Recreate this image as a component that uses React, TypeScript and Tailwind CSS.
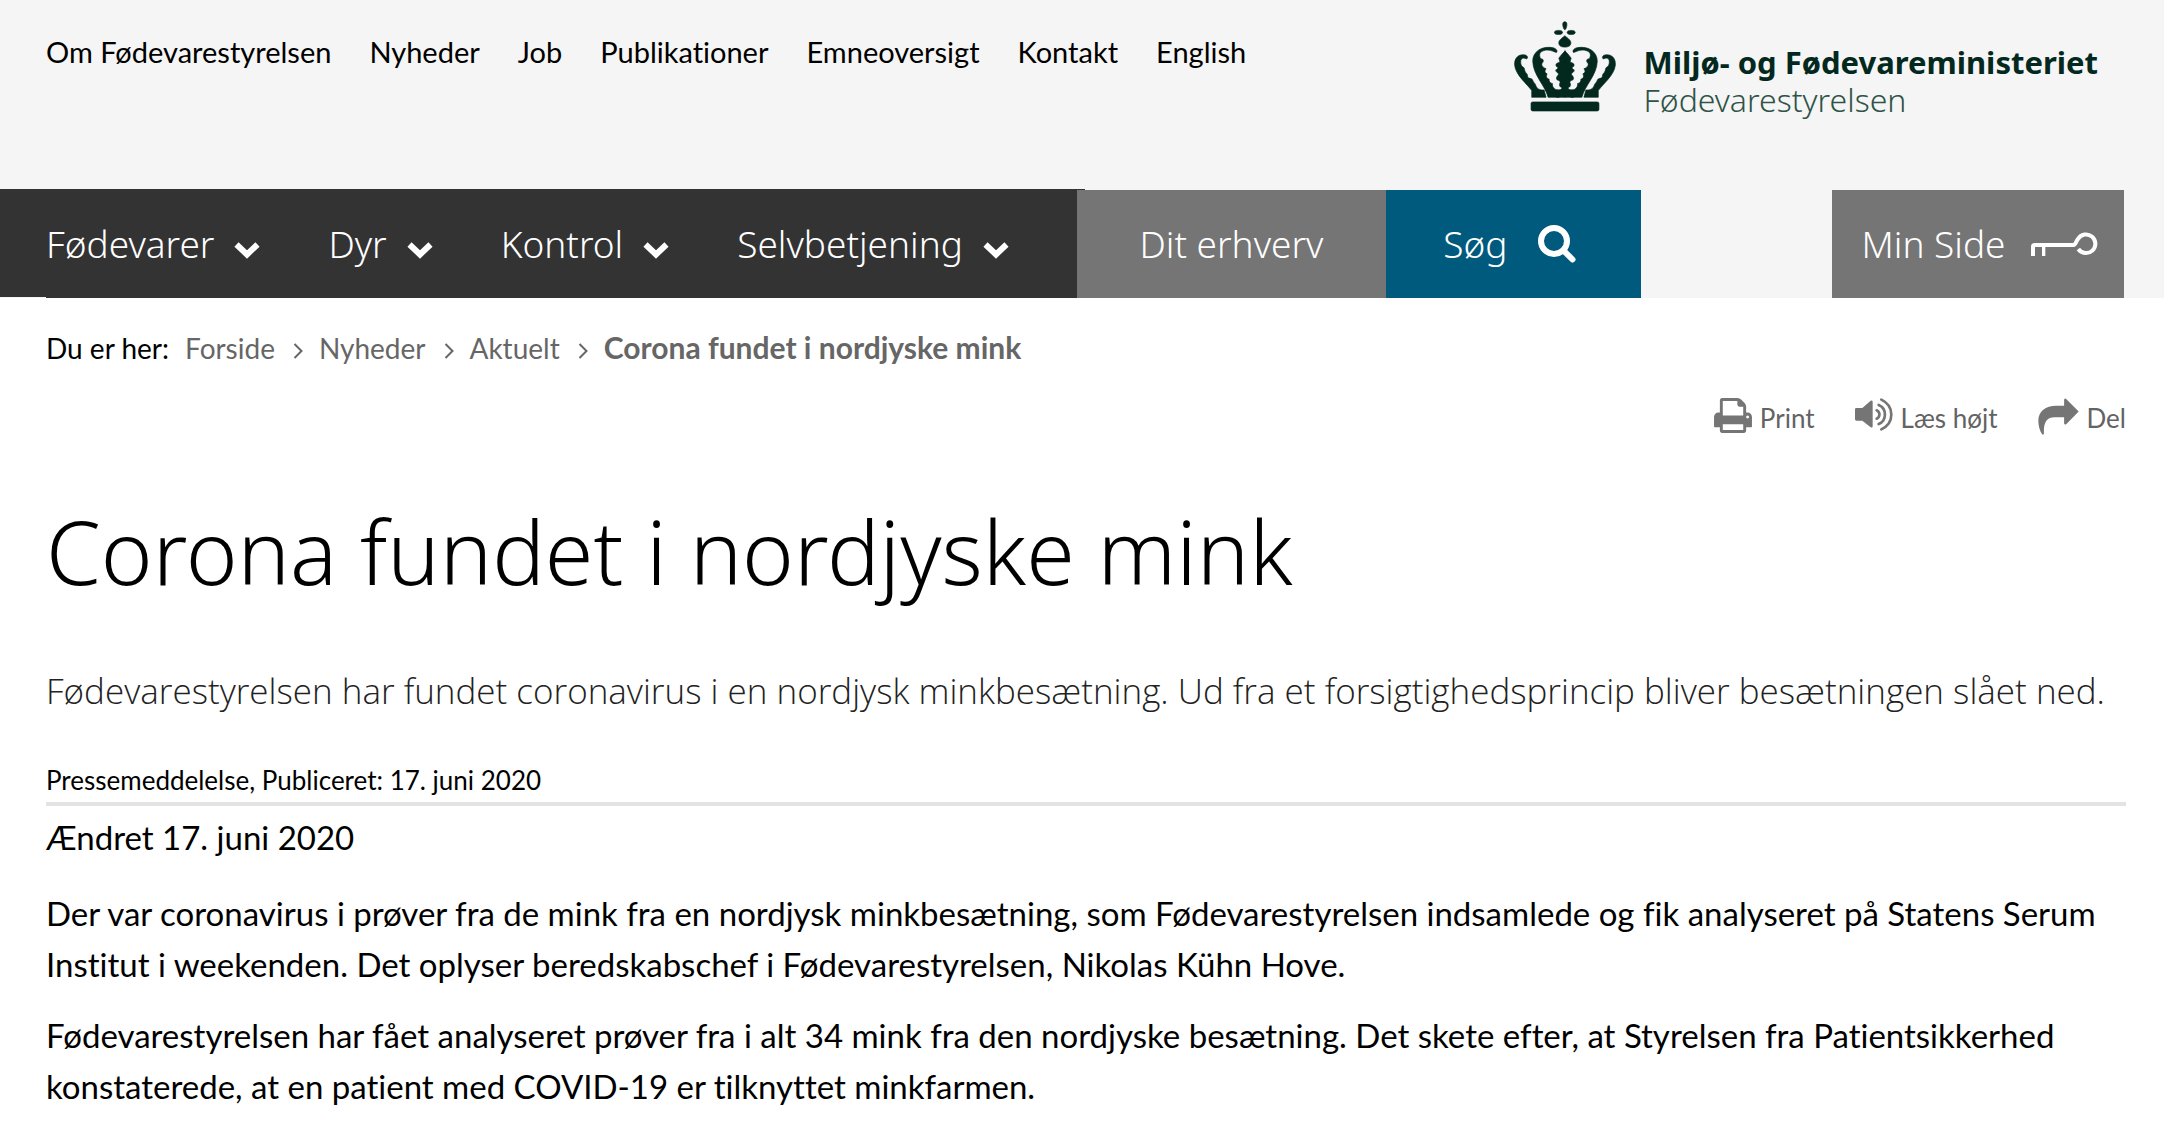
const topLinks = [
  'Om Fødevarestyrelsen',
  'Nyheder',
  'Job',
  'Publikationer',
  'Emneoversigt',
  'Kontakt',
  'English',
];

const menuItems = ['Fødevarer', 'Dyr', 'Kontrol', 'Selvbetjening'];

const crumbs = ['Forside', 'Nyheder', 'Aktuelt'];

function CrownHalf() {
  return (
    <>
      <path d="M94 262V242C80 222 46 196 43 166C41 143 57 131 76 136C83 138 83 148 77 147C69 142 60 146 61 157C61 164 64 170 69 172C74 175 71 182 76 188C82 192 81 199 83 204C88 206 95 205 97 211C98 217 104 220 106 226C108 235 118 242 131 240L137 262Z" />
      <path d="M143 262C134 226 98 196 97 154C97 126 124 107 158 114C169 117 172 125 168 128C160 127 142 113 121 127C116 132 117 142 121 147C131 147 130 156 125 160C122 166 126 172 137 177C132 183 132 188 140 192C136 200 138 206 146 208C145 216 150 220 156 221C155 230 160 238 172 241L176 262Z" />
      <path d="M194 123C187 130 181 137 175 145C176 150 180 155 176 158C168 160 165 163 167 169C175 172 173 177 166 180C165 188 176 189 174 195C168 200 166 206 170 210C178 212 181 215 178 220C176 226 177 231 184 233C185 240 176 240 168 240V262H194Z" />
    </>
  );
}

function Crown() {
  return (
    <svg
      viewBox="41 34 305 272"
      className="h-[91px] w-[102px] fill-[#03291f] stroke-[#03291f] stroke-2"
      aria-hidden="true"
    >
      <path d="M193 36c5 0 7 5 6 11s-3 13-6 13-5-7-6-13 1-11 6-11z" />
      <ellipse cx="174" cy="68" rx="12" ry="6" />
      <ellipse cx="212" cy="68" rx="12" ry="6" />
      <path d="M193 78C187 84 175 90 175 99C175 108 182 112 193 112S211 108 211 99C211 90 199 84 193 78Z" />
      <CrownHalf />
      <g transform="translate(387 0) scale(-1 1)">
        <CrownHalf />
      </g>
      <rect x="92" y="276" width="203" height="27" rx="5" />
    </svg>
  );
}

function ChevronIcon() {
  return (
    <svg
      viewBox="0 0 26 18"
      className="mt-3 h-[18px] w-[26px] fill-none stroke-white stroke-[6]"
      aria-hidden="true"
    >
      <path d="M2.500 3.500L13 13.500L23.500 3.500" />
    </svg>
  );
}

function SearchIcon() {
  return (
    <svg
      viewBox="0 0 38 38"
      className="h-[38px] w-[38px] fill-none stroke-white"
      aria-hidden="true"
    >
      <circle cx="16" cy="16" r="13" strokeWidth="6" />
      <path d="M26 26L34.500 34.500" strokeWidth="6" strokeLinecap="round" />
    </svg>
  );
}

function KeyIcon() {
  return (
    <svg
      viewBox="95 45 201 75"
      className="h-[25px] w-[67px] fill-none stroke-white"
      aria-hidden="true"
    >
      <path
        d="M101 117V89Q101 84 107 84H222C230 83 230 72 236 66A28 28 0 1 1 237 96"
        strokeWidth="12"
      />
      <path d="M133 84V117" strokeWidth="10" />
    </svg>
  );
}

function PrintIcon() {
  return (
    <svg
      viewBox="0 128 1664 1536"
      className="h-[35px] w-[38px] fill-[#757575]"
      aria-hidden="true"
    >
      <path d="M384 1536h896v-256h-896v256zM384 896h896v-384h-160q-40 0-68-28t-28-68v-160h-640v640zM1536 960q0-26-19-45t-45-19-45 19-19 45 19 45 45 19 45-19 19-45zM1664 960v416q0 13-9.500 22.500t-22.500 9.500h-224v160q0 40-28 68t-68 28h-960q-40 0-68-28t-28-68v-160h-224q-13 0-22.500-9.500t-9.500-22.500v-416q0-79 56.500-135.500t135.500-56.500h64v-544q0-40 28-68t68-28h672q40 0 88 20t76 48l152 152q28 28 48 76t20 88v256h64q79 0 135.500 56.500t56.500 135.500z" />
    </svg>
  );
}

function SpeakerIcon() {
  return (
    <svg
      viewBox="468 49 114 99"
      className="h-[33px] w-[38px] fill-[#757575]"
      aria-hidden="true"
    >
      <path d="M468 83Q468 79 472 79H490L515 57Q521 55 521 60V134Q521 139 515 137L490 117H472Q468 117 468 113Z" />
      <g className="fill-none stroke-[#757575] stroke-[8]" strokeLinecap="round">
        <path d="M533 86C544 91 544 106 533 111" />
        <path d="M539 70C564 80 564 117 539 127" />
        <path d="M547 54C587 73 587 124 547 143" />
      </g>
    </svg>
  );
}

function ShareIcon() {
  return (
    <svg
      viewBox="57 40 124 111"
      className="h-[37px] w-[41px] fill-[#757575]"
      aria-hidden="true"
    >
      <path d="M136 44Q139 39 143 43L180 80L143 118Q138 122 136 117V98H107C84 98 73 112 75 149L70 150C62 138 58 122 58 108C58 80 80 63 112 63H136Z" />
    </svg>
  );
}

function Header() {
  return (
    <header className="bg-[#f5f5f5]">
      <div className="flex h-[189px] items-start justify-between pl-[46px] pr-[66px]">
        <nav className="flex gap-[38px] pt-9 text-[29px] leading-8">
          {topLinks.map((link) => (
            <a key={link} href="#">
              {link}
            </a>
          ))}
        </nav>
        <a href="#" className="flex gap-7 pt-[21px]">
          <Crown />
          <span className="flex flex-col pt-[22px] font-['Noto_Sans',sans-serif] leading-[38px]">
            <span className="text-[31px] font-bold text-[#03291f]">
              Miljø- og Fødevareministeriet
            </span>
            <span className="text-[32px] font-light text-[#2f5347]">
              Fødevarestyrelsen
            </span>
          </span>
        </a>
      </div>

      <div className="-mb-px flex items-end font-['Noto_Sans',sans-serif] text-[37px] font-light text-white">
        <div className="h-[108px] w-[46px] self-start bg-[#333]" />
        <nav className="flex h-[109px] items-center gap-[68px] bg-[#333] pr-[76px]">
          {menuItems.map((item) => (
            <button
              key={item}
              type="button"
              className="flex items-center gap-5"
            >
              {item}
              <ChevronIcon />
            </button>
          ))}
        </nav>
        <a
          href="#"
          className="-ml-2 flex h-[108px] w-[309px] items-center justify-center bg-[#757575]"
        >
          Dit erhverv
        </a>
        <button
          type="button"
          className="flex h-[108px] w-[255px] items-center justify-center gap-[30px] bg-[#005a7d] pr-2"
        >
          Søg
          <SearchIcon />
        </button>
        <a
          href="#"
          className="ml-auto mr-10 flex h-[108px] w-[292px] items-center justify-center gap-[26px] bg-[#757575] pl-1"
        >
          Min Side
          <KeyIcon />
        </a>
      </div>
    </header>
  );
}

function Breadcrumbs() {
  return (
    <nav className="flex items-baseline gap-4 text-[28px] leading-9 text-[#666]">
      <span className="text-black">Du er her:</span>
      {crumbs.map((crumb) => (
        <span key={crumb} className="flex items-baseline gap-[18px]">
          <a href="#">{crumb}</a>
          <svg
            viewBox="0 0 10 16"
            className="h-4 w-[10px] fill-none stroke-[#666] stroke-2"
            aria-hidden="true"
          >
            <path d="M1.500 1L8.500 8L1.500 15" />
          </svg>
        </span>
      ))}
      <span className="text-[30px] font-bold">
        Corona fundet i nordjyske mink
      </span>
    </nav>
  );
}

function PageTools() {
  return (
    <div className="mt-8 flex justify-end gap-10 text-[26px] leading-10 text-[#636363]">
      <button type="button" className="flex items-start gap-2">
        <PrintIcon />
        Print
      </button>
      <button type="button" className="flex items-start gap-2">
        <SpeakerIcon />
        Læs højt
      </button>
      <button type="button" className="flex items-start gap-2">
        <ShareIcon />
        Del
      </button>
    </div>
  );
}

export default function App() {
  return (
    <div className="min-h-screen bg-white font-['Lato',sans-serif] text-black [font-variant-ligatures:none]">
      <Header />
      <main className="pb-6 pl-[46px] pr-[38px] pt-8">
        <Breadcrumbs />
        <PageTools />
        <article>
          <h1 className="mt-[58px] font-['Noto_Sans',sans-serif] text-[88px] font-light leading-[110px]">
            Corona fundet i nordjyske mink
          </h1>
          <p className="mt-[60px] font-['Open_Sans',sans-serif] text-[35px] font-light leading-[50px] text-[#222]">
            Fødevarestyrelsen har fundet coronavirus i en nordjysk
            minkbesætning. Ud fra et forsigtighedsprincip bliver besætningen
            slået ned.
          </p>
          <p className="mt-[46px] border-b-4 border-[#e3e3e3] pb-1 text-[26px] leading-9">
            Pressemeddelelse, Publiceret: 17. juni 2020
          </p>
          <div className="mt-[6px] text-[33px] leading-[51px]">
            <p>Ændret 17. juni 2020</p>
            <p className="mt-[25px]">
              Der var coronavirus i prøver fra de mink fra en nordjysk
              minkbesætning, som Fødevarestyrelsen indsamlede og fik analyseret
              på Statens Serum Institut i weekenden. Det oplyser beredskabschef
              i Fødevarestyrelsen, Nikolas Kühn Hove.
            </p>
            <p className="mt-5">
              Fødevarestyrelsen har fået analyseret prøver fra i alt 34 mink fra
              den nordjyske besætning. Det skete efter, at Styrelsen fra
              Patientsikkerhed konstaterede, at en patient med COVID-19 er
              tilknyttet minkfarmen.
            </p>
          </div>
        </article>
      </main>
    </div>
  );
}
